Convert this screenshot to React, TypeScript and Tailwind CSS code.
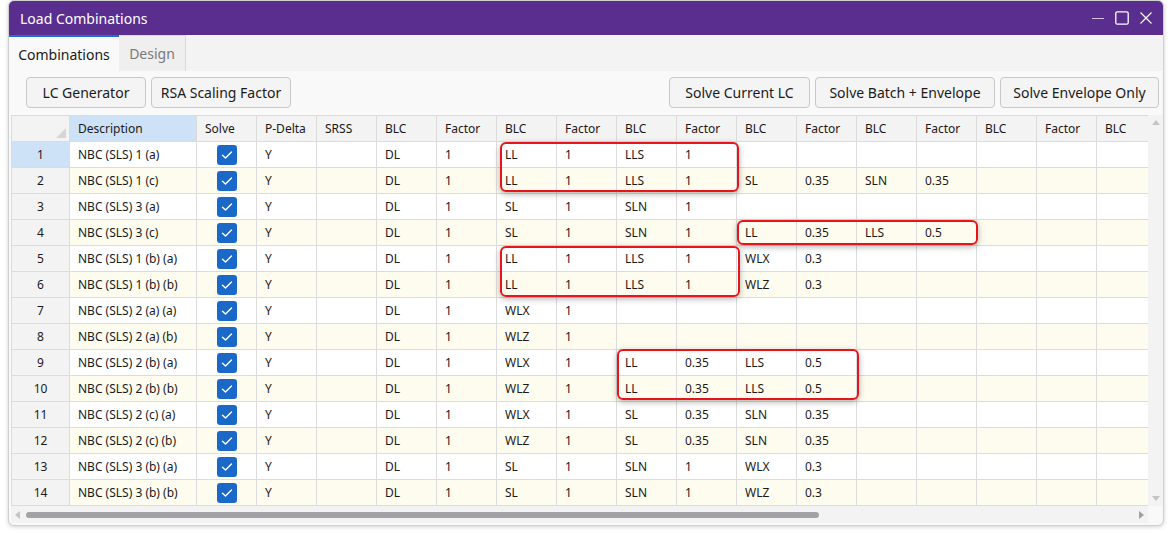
import React from 'react';

type Row = { desc: string; blc: string[] };

const rows: Row[] = [
  { desc: 'NBC (SLS) 1 (a)', blc: ['DL', '1', 'LL', '1', 'LLS', '1'] },
  { desc: 'NBC (SLS) 1 (c)', blc: ['DL', '1', 'LL', '1', 'LLS', '1', 'SL', '0.35', 'SLN', '0.35'] },
  { desc: 'NBC (SLS) 3 (a)', blc: ['DL', '1', 'SL', '1', 'SLN', '1'] },
  { desc: 'NBC (SLS) 3 (c)', blc: ['DL', '1', 'SL', '1', 'SLN', '1', 'LL', '0.35', 'LLS', '0.5'] },
  { desc: 'NBC (SLS) 1 (b) (a)', blc: ['DL', '1', 'LL', '1', 'LLS', '1', 'WLX', '0.3'] },
  { desc: 'NBC (SLS) 1 (b) (b)', blc: ['DL', '1', 'LL', '1', 'LLS', '1', 'WLZ', '0.3'] },
  { desc: 'NBC (SLS) 2 (a) (a)', blc: ['DL', '1', 'WLX', '1'] },
  { desc: 'NBC (SLS) 2 (a) (b)', blc: ['DL', '1', 'WLZ', '1'] },
  { desc: 'NBC (SLS) 2 (b) (a)', blc: ['DL', '1', 'WLX', '1', 'LL', '0.35', 'LLS', '0.5'] },
  { desc: 'NBC (SLS) 2 (b) (b)', blc: ['DL', '1', 'WLZ', '1', 'LL', '0.35', 'LLS', '0.5'] },
  { desc: 'NBC (SLS) 2 (c) (a)', blc: ['DL', '1', 'WLX', '1', 'SL', '0.35', 'SLN', '0.35'] },
  { desc: 'NBC (SLS) 2 (c) (b)', blc: ['DL', '1', 'WLZ', '1', 'SL', '0.35', 'SLN', '0.35'] },
  { desc: 'NBC (SLS) 3 (b) (a)', blc: ['DL', '1', 'SL', '1', 'SLN', '1', 'WLX', '0.3'] },
  { desc: 'NBC (SLS) 3 (b) (b)', blc: ['DL', '1', 'SL', '1', 'SLN', '1', 'WLZ', '0.3'] },
];

const blcHeaders = ['BLC', 'Factor', 'BLC', 'Factor', 'BLC', 'Factor', 'BLC', 'Factor', 'BLC', 'Factor', 'BLC', 'Factor', 'BLC'];

// red highlight boxes drawn over the grid (left, top, width, height relative to grid)
const highlights = [
  { left: 488, top: 26, width: 239, height: 50 },
  { left: 725, top: 104, width: 241, height: 25 },
  { left: 488, top: 130, width: 240, height: 51 },
  { left: 605, top: 233, width: 242, height: 51 },
];

const Cell: React.FC<{ w: string; children?: React.ReactNode; className?: string }> = ({ w, children, className = '' }) => (
  <div className={`${w} shrink-0 h-full border-r border-[#dcdcdc] flex items-center pl-[8px] ${className}`}>{children}</div>
);

const CheckBox = () => (
  <div className="w-[20px] h-[20px] rounded-[3px] bg-[#1a68c7] flex items-center justify-center">
    <svg width="12" height="10" viewBox="0 0 12 10" fill="none">
      <path d="M1.5 5.2 L4.5 8 L10.5 2" stroke="white" strokeWidth="1.4" strokeLinecap="round" strokeLinejoin="round" />
    </svg>
  </div>
);

const ToolButton: React.FC<{ w: string; children: React.ReactNode }> = ({ w, children }) => (
  <button className={`${w} h-[31px] rounded-[4px] border border-[#c8c8c8] bg-[#f4f4f4] text-[14px] text-[#1b1b1b] flex items-center justify-center`}>
    {children}
  </button>
);

export default function App() {
  return (
    <div className="w-[1171px] h-[533px] bg-white pl-[8px]" style={{ fontFamily: '"Segoe UI", "Noto Sans", sans-serif' }}>
      <div className="w-[1156px] h-[526px] rounded-[6px] border border-[#cfcfcf] shadow-[0_1px_4px_rgba(0,0,0,0.18)] overflow-hidden bg-[#f9f9f9] flex flex-col">
        {/* title bar */}
        <div className="h-[34px] bg-[#5a2e8e] flex items-center justify-between pl-[11px] pr-[10px] shrink-0">
          <span className="text-white text-[14px]">Load Combinations</span>
          <div className="flex items-center gap-[10px] text-white">
            <svg width="14" height="14" viewBox="0 0 14 14"><path d="M1 7.5 H13" stroke="#cfc3e0" strokeWidth="1.2" /></svg>
            <svg width="14" height="14" viewBox="0 0 14 14"><rect x="0.8" y="0.8" width="12.4" height="12.4" rx="1.5" fill="none" stroke="white" strokeWidth="1.3" /></svg>
            <svg width="14" height="14" viewBox="0 0 14 14"><path d="M1.5 1.5 L12.5 12.5 M12.5 1.5 L1.5 12.5" stroke="white" strokeWidth="1.2" /></svg>
          </div>
        </div>

        {/* tabs */}
        <div className="h-[36px] bg-[#f3f3f3] flex shrink-0">
          <div className="w-[110px] h-full bg-[#f9f9f9] border-t-2 border-[#1f6fd0] flex items-center justify-center text-[14px] text-[#1b1b1b]">
            Combinations
          </div>
          <div className="w-[67px] h-full bg-[#efefef] border-t border-r border-[#dadada] flex items-center justify-center text-[14px] text-[#7a7a7a]">
            Design
          </div>
        </div>

        {/* toolbar */}
        <div className="flex items-center justify-between pl-[17px] pr-[4px] pt-[6px] shrink-0">
          <div className="flex gap-[5px]">
            <ToolButton w="w-[120px]">LC Generator</ToolButton>
            <ToolButton w="w-[140px]">RSA Scaling Factor</ToolButton>
          </div>
          <div className="flex gap-[5px]">
            <ToolButton w="w-[141px]">Solve Current LC</ToolButton>
            <ToolButton w="w-[180px]">Solve Batch + Envelope</ToolButton>
            <ToolButton w="w-[159px]">Solve Envelope Only</ToolButton>
          </div>
        </div>

        {/* grid */}
        <div className="mt-[7px] ml-[2px] w-[1152px] flex flex-col">
          <div className="flex">
            <div className="relative w-[1137px] overflow-hidden text-[12px] text-[#1a1a1a] border-l border-t border-[#dcdcdc] bg-white">
              {/* header */}
              <div className="flex h-[26px] bg-[#f3f3f3] border-b border-[#dcdcdc]">
                <div className="w-[58px] shrink-0 h-full border-r border-[#dcdcdc] relative">
                  <svg className="absolute right-[3px] bottom-[3px]" width="10" height="10" viewBox="0 0 10 10"><path d="M10 0 L10 10 L0 10 Z" fill="#d6d6d6" /></svg>
                </div>
                <Cell w="w-[127px]" className="bg-[#cde2f6]">Description</Cell>
                <Cell w="w-[60px]">Solve</Cell>
                <Cell w="w-[60px]">P-Delta</Cell>
                <Cell w="w-[60px]">SRSS</Cell>
                {blcHeaders.map((h, i) => (
                  <Cell key={i} w="w-[60px]">{h}</Cell>
                ))}
              </div>
              {rows.map((r, i) => {
                const even = i % 2 === 1;
                return (
                  <div key={i} className={`flex h-[26px] border-b border-[#dcdcdc] ${even ? 'bg-[#fefcee]' : 'bg-white'}`}>
                    <div className={`w-[58px] shrink-0 h-full border-r border-[#dcdcdc] flex items-center justify-center ${i === 0 ? 'bg-[#cde2f6]' : 'bg-[#f3f3f3]'}`}>
                      {i + 1}
                    </div>
                    <Cell w="w-[127px]">{r.desc}</Cell>
                    <div className="w-[60px] shrink-0 h-full border-r border-[#dcdcdc] flex items-center justify-center">
                      <CheckBox />
                    </div>
                    <Cell w="w-[60px]">Y</Cell>
                    <Cell w="w-[60px]"></Cell>
                    {blcHeaders.map((_, j) => (
                      <Cell key={j} w="w-[60px]">{r.blc[j] ?? ''}</Cell>
                    ))}
                  </div>
                );
              })}
              {highlights.map((h, i) => (
                <div
                  key={i}
                  className="absolute rounded-[6px] border-2 border-[#e8131b] shadow-[0_2px_6px_rgba(0,0,0,0.3)]"
                  style={{ left: h.left, top: h.top, width: h.width, height: h.height }}
                />
              ))}
            </div>
            {/* vertical scrollbar */}
            <div className="w-[15px] bg-[#f3f3f3] flex flex-col items-center justify-between py-[5px]">
              <svg width="8" height="5" viewBox="0 0 8 5"><path d="M0 5 L4 0 L8 5 Z" fill="#c4c4c4" /></svg>
              <svg width="8" height="5" viewBox="0 0 8 5"><path d="M0 0 L4 5 L8 0 Z" fill="#c4c4c4" /></svg>
            </div>
          </div>
          {/* horizontal scrollbar */}
          <div className="h-[17px] w-[1137px] bg-[#f3f3f3] flex items-center px-[4px] gap-[6px]">
            <svg width="5" height="8" viewBox="0 0 5 8"><path d="M5 0 L0 4 L5 8 Z" fill="#c4c4c4" /></svg>
            <div className="flex-1 flex items-center">
              <div className="w-[793px] h-[6px] rounded-full bg-[#a3a3a7]" />
            </div>
            <svg width="5" height="8" viewBox="0 0 5 8"><path d="M0 0 L5 4 L0 8 Z" fill="#a0a0a0" /></svg>
          </div>
        </div>
      </div>
    </div>
  );
}
